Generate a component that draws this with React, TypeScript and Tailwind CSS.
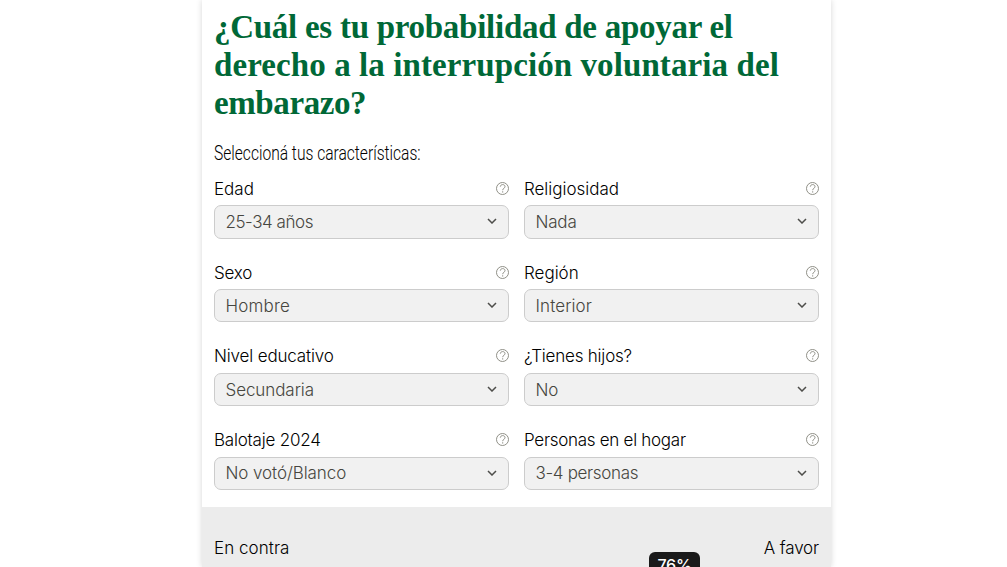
import { useState } from 'react';

interface Field {
  id: string;
  label: string;
  value: string;
  labelClass: string;
  valueClass: string;
}

const fields: Field[] = [
  { id: 'edad', label: 'Edad', value: '25-34 años', labelClass: 'tracking-[0px]', valueClass: 'tracking-[-0.45px]' },
  { id: 'religiosidad', label: 'Religiosidad', value: 'Nada', labelClass: 'tracking-[-0.02px]', valueClass: 'tracking-[-0.2px]' },
  { id: 'sexo', label: 'Sexo', value: 'Hombre', labelClass: 'tracking-[-0.2px]', valueClass: 'tracking-[0.2px]' },
  { id: 'region', label: 'Región', value: 'Interior', labelClass: 'tracking-[0px]', valueClass: 'tracking-[0.1px]' },
  { id: 'educacion', label: 'Nivel educativo', value: 'Secundaria', labelClass: 'tracking-[-0.15px]', valueClass: 'tracking-[-0.08px]' },
  { id: 'hijos', label: '¿Tienes hijos?', value: 'No', labelClass: 'tracking-[-0.2px]', valueClass: 'tracking-[-0.2px]' },
  { id: 'balotaje', label: 'Balotaje 2024', value: 'No votó/Blanco', labelClass: 'tracking-[-0.2px]', valueClass: 'tracking-[-0.08px]' },
  { id: 'hogar', label: 'Personas en el hogar', value: '3-4 personas', labelClass: 'tracking-[-0.28px]', valueClass: 'tracking-[-0.33px]' },
];

function HelpIcon() {
  return (
    <svg className="mb-px size-[13px] text-[#84847a]" viewBox="0 0 13 13" fill="none" stroke="currentColor">
      <circle cx="6.5" cy="6.5" r="6" strokeWidth="0.9" />
      <path d="M4.3 4.7C4.4 1.9 9 1.9 9 4.6C9 6.3 6.7 6.2 6.7 8.2" strokeWidth="0.9" />
      <path d="M6.7 9.3V10.5" strokeWidth="1" />
    </svg>
  );
}

function Chevron() {
  return (
    <svg
      className="pointer-events-none col-start-1 row-start-1 mr-3 mb-px h-[6px] w-[10px] justify-self-end text-[#4d4d4a]"
      viewBox="0 0 10 6"
      fill="none"
      stroke="currentColor"
      strokeWidth="1.5"
    >
      <path d="M1 1L5 5L9 1" />
    </svg>
  );
}

function SelectField({ field }: { field: Field }) {
  const [value, setValue] = useState(field.value);

  return (
    <div>
      <div className="flex h-6 items-center justify-between">
        <label htmlFor={field.id} className={`text-[17px] leading-6 text-black ${field.labelClass}`}>
          {field.label}
        </label>
        <HelpIcon />
      </div>
      <div className="mt-[4.5px] grid items-center">
        <select
          id={field.id}
          value={value}
          onChange={(e) => setValue(e.target.value)}
          className={`col-start-1 row-start-1 h-[33.25px] w-full appearance-none rounded-[7px] border border-[#cccccc] bg-[#f1f1f1] pt-[2px] pl-[10.5px] text-[17px] text-[#464640] ${field.valueClass}`}
        >
          <option>{field.value}</option>
        </select>
        <Chevron />
      </div>
    </div>
  );
}

export default function App() {
  return (
    <div className="h-[567px] overflow-hidden bg-white font-['Inter','Liberation_Sans',sans-serif] font-light">
      <main className="ml-[202px] flex h-[567px] w-[629px] flex-col shadow-[0_0_6px_rgba(0,0,0,0.16)]">
        <div className="h-[507px] shrink-0 px-3 pt-2">
          <h1 className="font-['Liberation_Serif',serif] text-[33px] leading-[38px] font-bold text-[#006837]">
            <span className="block whitespace-nowrap tracking-[-0.27px]">¿Cuál es tu probabilidad de apoyar el</span>
            <span className="block whitespace-nowrap tracking-[0.09px]">derecho a la interrupción voluntaria del</span>
            <span className="block whitespace-nowrap tracking-[-0.4px]">embarazo?</span>
          </h1>
          <p className="mt-[17px] h-7 origin-left scale-x-[0.779] whitespace-nowrap font-['Roboto',sans-serif] text-[20px] leading-7 font-light text-black">
            Seleccioná tus características:
          </p>
          <div className="mt-[9.75px] grid grid-cols-2 gap-x-[15px] gap-y-[22px]">
            {fields.map((field) => (
              <SelectField key={field.id} field={field} />
            ))}
          </div>
        </div>

        <section className="h-[60px] overflow-hidden bg-[#ececec] px-3 pt-[29px] text-[17px] leading-6 text-black">
          <div className="relative flex justify-between">
            <span className="tracking-[0.05px]">En contra</span>
            <span className="tracking-[-0.15px]">A favor</span>
            <div className="absolute top-4 left-[435px] h-7 w-[51px] rounded-[6px] bg-[#1a1a1a] text-center text-[16px] leading-[26px] font-medium tracking-[-0.3px] text-white">
              76%
            </div>
          </div>
        </section>
      </main>
    </div>
  );
}
